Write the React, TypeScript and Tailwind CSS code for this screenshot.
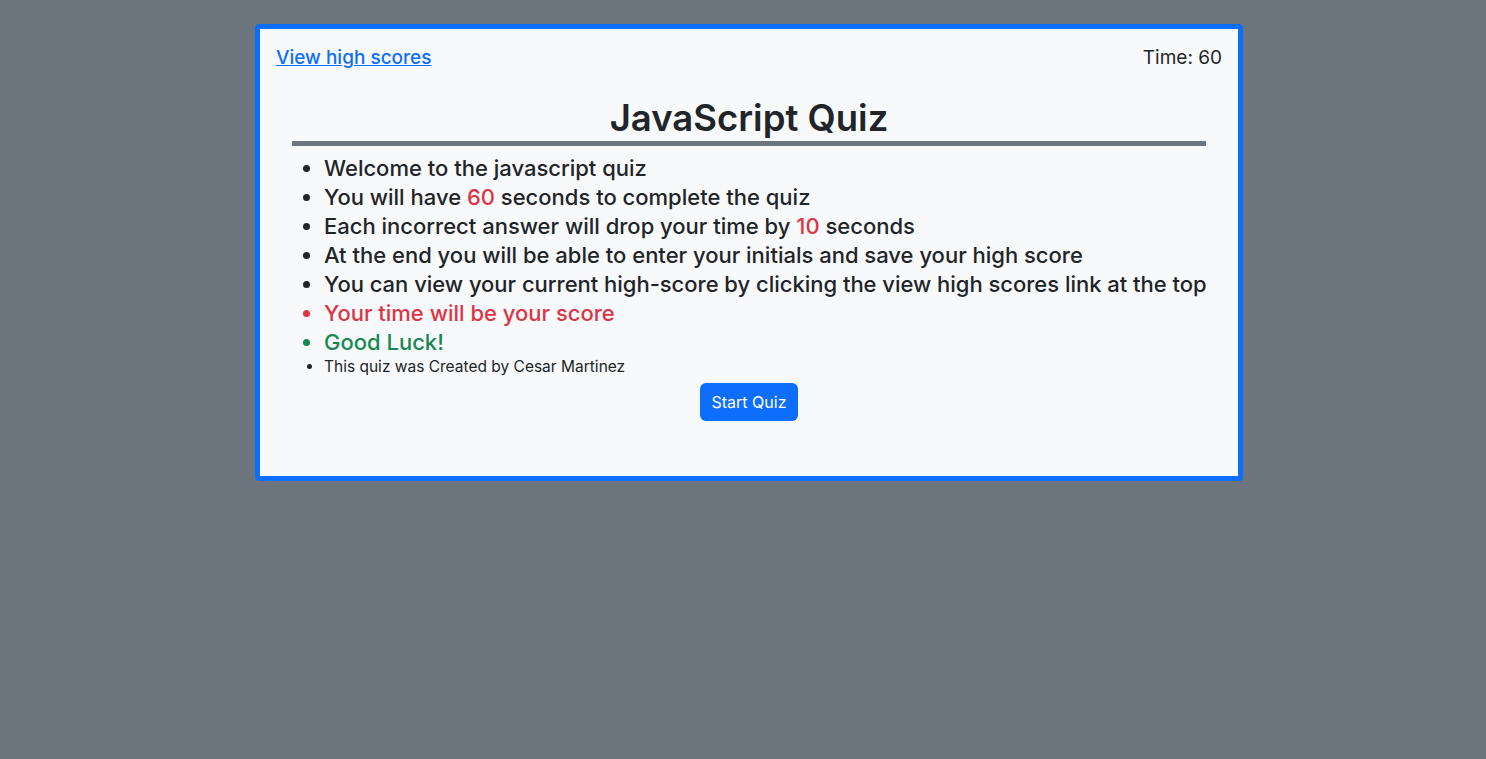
export default function App() {
  const font = { fontFamily: "Inter, 'Noto Sans', sans-serif" };
  return (
    <div className="min-h-[759px] w-full bg-[#6c757d] pt-[24px]" style={font}>
      <div className="ml-[255px] w-[988px] h-[457px] rounded-[4px] border-[5px] border-[#0d6efd] bg-[#f8f9fa] text-[#212529]">
        <div className="flex items-center justify-between px-4 pt-[17px] text-[19px] leading-[24px]">
          <a href="#" className="font-medium text-[#0d6efd] underline">
            View high scores
          </a>
          <span>Time: 60</span>
        </div>

        <div className="mx-[32px]">
          <h1 className="mt-[26px] text-center text-[36.5px] leading-[45px] font-semibold">JavaScript Quiz</h1>
          <div className="h-[5px] bg-[#6c757d]"></div>
          <ul className="mt-[8px] list-disc pl-8 text-[22px] leading-[29px] font-medium">
            <li>Welcome to the javascript quiz</li>
            <li>
              You will have <span className="text-[#dc3545]">60</span> seconds to complete the quiz
            </li>
            <li>
              Each incorrect answer will drop your time by <span className="text-[#dc3545]">10</span> seconds
            </li>
            <li>At the end you will be able to enter your initials and save your high score</li>
            <li className="whitespace-nowrap tracking-[-0.02px]">
              You can view your current high-score by clicking the view high scores link at the top
            </li>
            <li className="text-[#dc3545]">Your time will be your score</li>
            <li className="text-[#198754]">Good Luck!</li>
            <li className="text-[15.5px] leading-[19px] font-normal">This quiz was Created by Cesar Martinez</li>
          </ul>
          <div className="mt-[7px] flex justify-center">
            <button className="h-[38px] rounded-[6px] bg-[#0d6efd] px-3 text-[16px] text-white">Start Quiz</button>
          </div>
        </div>
      </div>
    </div>
  );
}
